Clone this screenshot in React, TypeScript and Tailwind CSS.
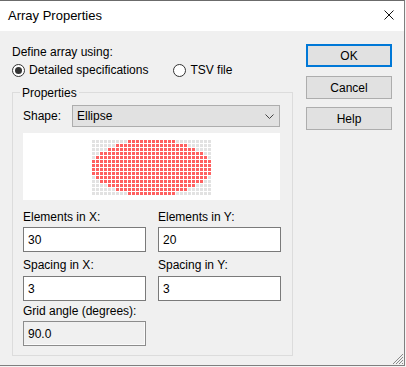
import React from "react";

const starts = [9, 6, 4, 2, 1, 0, 0, 0, 0, 1, 2, 4, 6, 9];

const Preview = () => (
  <div className="mt-[6px] h-[67px] w-[257px] bg-white flex justify-center pt-[7px]">
    <div className="grid grid-cols-[repeat(30,3px)] gap-[1px] h-fit">
      {starts.map((s, r) =>
        Array.from({ length: 30 }, (_, c) => (
          <div
            key={`${r}-${c}`}
            className={
              c >= s && c <= 29 - s
                ? "w-[3px] h-[3px] bg-[#ff6060]"
                : "w-[3px] h-[3px] bg-[#e2e2e2]"
            }
          />
        ))
      )}
    </div>
  </div>
);

const Field = ({
  label,
  value,
  disabled,
  gap,
}: {
  label: string;
  value: string;
  disabled?: boolean;
  gap: string;
}) => (
  <div className="w-[123px]">
    <div className="h-[16px] leading-[16px] whitespace-nowrap">{label}</div>
    <div
      className={
        disabled
          ? `${gap} h-[25px] border border-[#8c8c8c] bg-[#f0f0f0] shadow-[inset_-1px_-1px_0_#fbfbfb] flex items-center pl-[4px]`
          : `${gap} h-[25px] border border-[#7a7a7a] bg-white flex items-center pl-[4px]`
      }
    >
      {value}
    </div>
  </div>
);

const Radio = ({ checked, label }: { checked?: boolean; label: string }) => (
  <div className="flex items-center h-[16px]">
    <div className="w-[13px] h-[13px] rounded-full border border-[#333] bg-white flex items-center justify-center">
      {checked && <div className="w-[7px] h-[7px] rounded-full bg-[#333]" />}
    </div>
    <span className="ml-[4px] leading-[16px]">{label}</span>
  </div>
);

const Button = ({ label, primary, className }: { label: string; primary?: boolean; className: string }) => (
  <div
    className={
      primary
        ? `${className} w-[86px] h-[23px] border-2 border-[#0078d7] bg-[#e1e1e1] flex items-center justify-center`
        : `${className} w-[86px] h-[23px] border border-[#adadad] bg-[#e1e1e1] flex items-center justify-center`
    }
  >
    {label}
  </div>
);

export default function App() {
  return (
    <div className="w-[406px] h-[367px] bg-[#f4f4f4] text-[12px] text-black font-['Liberation_Sans',Arial,sans-serif]">
      <div className="relative w-[405px] h-[366px] border-t border-r border-b border-t-[#6b6b6b] border-r-[#7f7f7f] border-b-[#7f7f7f] flex flex-col">
        <div className="h-[30px] bg-white flex items-center justify-between pl-[8px] pr-[10px]">
          <span className="text-[13px] leading-[16px]">Array Properties</span>
          <svg width="10" height="10" viewBox="0 0 10 10" className="mb-[2px]">
            <path d="M0.5 0.5 L9.5 9.5 M9.5 0.5 L0.5 9.5" stroke="#111" strokeWidth="1" />
          </svg>
        </div>
        <div className="flex-1 bg-[#f0f0f0] flex">
          <div className="pl-[12px] flex flex-col">
            <div className="mt-[13px] h-[16px] leading-[16px]">Define array using:</div>
            <div className="mt-[2px] flex">
              <Radio checked label="Detailed specifications" />
              <div className="ml-[25px]">
                <Radio label="TSV file" />
              </div>
            </div>
            <div className="relative mt-[14px] w-[281px] border border-[#dcdcdc] pl-[10px] pt-[12px] pb-[9px]">
              <span className="absolute -top-[8px] left-[7px] px-[2px] bg-[#f0f0f0] leading-[16px]">
                Properties
              </span>
              <div className="flex items-center">
                <span className="w-[49px]">Shape:</span>
                <div className="w-[208px] h-[22px] border border-[#adadad] bg-[#e1e1e1] flex items-center justify-between pl-[4px] pr-[5px]">
                  <span>Ellipse</span>
                  <svg width="9" height="5" viewBox="0 0 9 5">
                    <path d="M0.5 0.5 L4.5 4.5 L8.5 0.5" stroke="#444" strokeWidth="1" fill="none" />
                  </svg>
                </div>
              </div>
              <Preview />
              <div className="mt-[9px] flex gap-[12px]">
                <Field label="Elements in X:" value="30" gap="mt-[2px]" />
                <Field label="Elements in Y:" value="20" gap="mt-[2px]" />
              </div>
              <div className="mt-[5px] flex gap-[12px]">
                <Field label="Spacing in X:" value="3" gap="mt-[3px]" />
                <Field label="Spacing in Y:" value="3" gap="mt-[3px]" />
              </div>
              <div className="mt-[2px] flex">
                <Field label="Grid angle (degrees):" value="90.0" disabled gap="mt-[2px]" />
              </div>
            </div>
          </div>
          <div className="ml-[13px] flex flex-col">
            <Button label="OK" primary className="mt-[13px]" />
            <Button label="Cancel" className="mt-[9px]" />
            <Button label="Help" className="mt-[8px]" />
          </div>
        </div>
        <svg width="10" height="10" viewBox="0 0 10 10" className="absolute right-[1px] bottom-[1px]">
          {[
            [8, 1], [6, 3], [4, 5], [2, 7], [0, 9],
            [8, 4], [6, 6], [4, 8],
            [8, 7], [6, 9],
            [7, 2], [5, 4], [3, 6], [1, 8],
            [7, 5], [5, 7], [3, 9],
            [7, 8], [9, 0], [9, 3], [9, 6], [9, 9],
          ].map(([x, y], i) => (
            <rect key={i} x={x} y={y} width="1" height="1" fill="#8a8a8a" />
          ))}
        </svg>
      </div>
    </div>
  );
}
